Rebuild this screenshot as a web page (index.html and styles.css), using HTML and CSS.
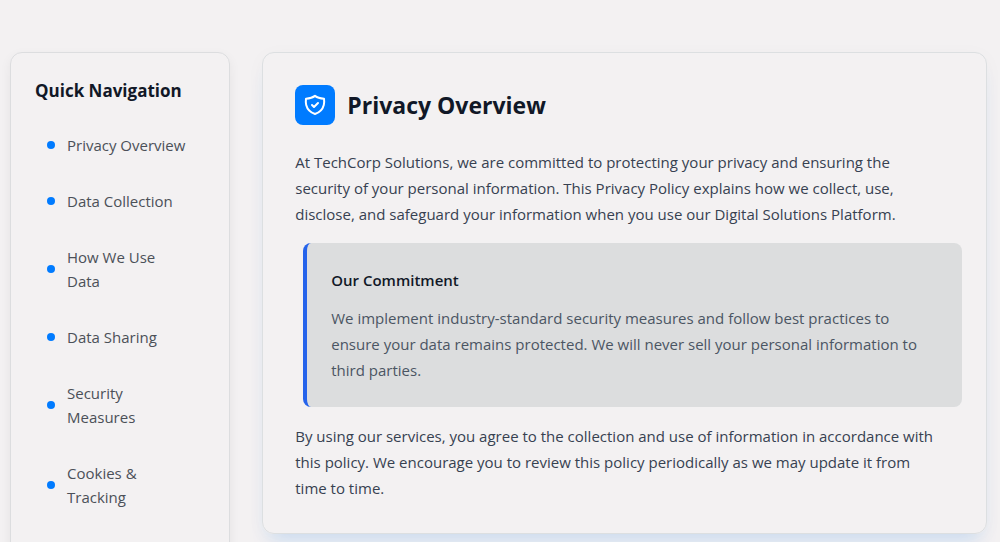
FILE: index.html
```
<!DOCTYPE html>
<html lang="en">
  <head>
    <meta charset="utf-8">
    <meta name="viewport" content="width=device-width, initial-scale=1.0">
    <title>Privacy Policy</title>
    <link rel="stylesheet" href="styles.css">
  </head>
  <body>
    <div class="layout">
      <!-- Sidebar -->
      <nav class="sidebar" aria-labelledby="nav-title">
        <h3 id="nav-title" class="nav-title">Quick Navigation</h3>
        <ul class="nav-list">
          <li><a class="nav-link" href="#overview">Privacy Overview</a></li>
          <li><a class="nav-link" href="#collection">Data Collection</a></li>
          <li><a class="nav-link" href="#usage">How We Use Data</a></li>
          <li><a class="nav-link" href="#sharing">Data Sharing</a></li>
          <li><a class="nav-link" href="#security">Security Measures</a></li>
          <li><a class="nav-link" href="#cookies">Cookies &amp; Tracking</a></li>
        </ul>
      </nav>

      <!-- Content -->
      <main class="content">
        <section id="overview" class="card">
          <div class="card-header">
            <div class="card-icon">
              <svg width="24" height="24" viewBox="0 0 24 24" fill="none" stroke="currentColor" stroke-width="2" stroke-linecap="round" stroke-linejoin="round" aria-hidden="true">
                <path d="M12 2.900C9.500 4.900 6.500 5.500 3 5.700C2.700 8 2.700 10 3.200 12C4.400 16.700 7.500 19.500 12 21C16.500 19.500 19.600 16.700 20.800 12C21.300 10 21.300 8 21 5.700C17.500 5.500 14.500 4.900 12 2.900z"/>
                <path d="M9 12l2 2 4-4"/>
              </svg>
            </div>
            <h2 class="card-title">Privacy Overview</h2>
          </div>
          <p class="card-text">At TechCorp Solutions, we are committed to protecting your privacy and ensuring the security of your personal information. This Privacy Policy explains how we collect, use, disclose, and safeguard your information when you use our Digital Solutions Platform.</p>
          <div class="highlight">
            <h4>Our Commitment</h4>
            <p>We implement industry-standard security measures and follow best practices to ensure your data remains protected. We will never sell your personal information to third parties.</p>
          </div>
          <p class="card-text">By using our services, you agree to the collection and use of information in accordance with this policy. We encourage you to review this policy periodically as we may update it from time to time.</p>
        </section>
      </main>
    </div>
  </body>
</html>
```
FILE: styles.css
```
* {
  box-sizing: border-box;
  margin: 0;
  padding: 0;
}

body {
  background-color: #f3f1f2;
  color: #374151;
  font-family: "Segoe UI", "Open Sans", "Noto Sans", sans-serif;
  font-size: 15px;
  line-height: 26px;
}

.layout {
  display: grid;
  grid-template-columns: repeat(4, 1fr);
  gap: 32px;
  align-items: start;
  padding: 52px 13px 32px 10px;
}

/* Sidebar */
.sidebar {
  padding: 24px 24px 48px;
  border: 1px solid #dcdddf;
  border-radius: 12px;
  box-shadow: 0 4px 12px rgba(0, 0, 0, 0.06);
}

.nav-title {
  margin-bottom: 16px;
  color: #111827;
  font-size: 17px;
  font-weight: 700;
  line-height: 28px;
}

.nav-list {
  display: flex;
  flex-direction: column;
  gap: 8px;
  list-style: none;
}

.nav-link {
  display: flex;
  align-items: center;
  gap: 12px;
  padding: 12px 16px 12px 12px;
  color: #4b5058;
  line-height: 24px;
  text-decoration: none;
}

.nav-link::before {
  content: "";
  flex-shrink: 0;
  width: 8px;
  height: 8px;
  border-radius: 50%;
  background-color: #007bff;
}

/* Content */
.content {
  grid-column: span 3;
}

.card {
  padding: 32px;
  border: 1px solid #dcdfe1;
  border-radius: 12px;
  box-shadow: 0 4px 20px rgba(0, 80, 100, 0.03), 0 16px 20px -8px rgba(0, 123, 255, 0.14);
}

.card-header {
  display: flex;
  align-items: center;
  gap: 12px;
  margin-bottom: 24px;
}

.card-icon {
  display: flex;
  align-items: center;
  justify-content: center;
  width: 40px;
  height: 40px;
  border-radius: 8px;
  background-color: #007bff;
  color: #fff;
}

.card-title {
  color: #111827;
  font-size: 23px;
  font-weight: 700;
  line-height: 32px;
}

.card-text {
  padding-right: 12px;
}

.highlight {
  margin: 16px -8px 16px 8px;
  padding: 24px;
  border-left: 4px solid #2563eb;
  border-radius: 8px;
  background-color: #dcddde;
}

.highlight h4 {
  margin-bottom: 12px;
  color: #111827;
  font-size: 15px;
  font-weight: 600;
}

.highlight p {
  color: #4b5563;
}
```
